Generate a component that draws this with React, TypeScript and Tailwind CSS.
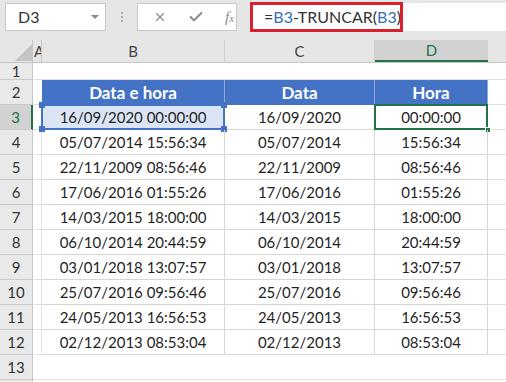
import { X, Check } from "lucide-react"

const rows = [
  ["16/09/2020 00:00:00", "16/09/2020", "00:00:00"],
  ["05/07/2014 15:56:34", "05/07/2014", "15:56:34"],
  ["22/11/2009 08:56:46", "22/11/2009", "08:56:46"],
  ["17/06/2016 01:55:26", "17/06/2016", "01:55:26"],
  ["14/03/2015 18:00:00", "14/03/2015", "18:00:00"],
  ["06/10/2014 20:44:59", "06/10/2014", "20:44:59"],
  ["03/01/2018 13:07:57", "03/01/2018", "13:07:57"],
  ["25/07/2016 09:56:46", "25/07/2016", "09:56:46"],
  ["24/05/2013 16:56:53", "24/05/2013", "16:56:53"],
  ["02/12/2013 08:53:04", "02/12/2013", "08:53:04"],
]

const font = { fontFamily: "Lato, 'Noto Sans', sans-serif" }

function RowHead({ n, active }: { n?: number; active?: boolean }) {
  return (
    <div
      className={`w-[33px] shrink-0 flex items-center justify-center border-b border-[#cacaca] text-[15px] ${
        active
          ? "bg-[#d2d2d2] text-[#217346] border-r-2 border-r-[#217346]"
          : "bg-[#e9e9e9] text-[#333] border-r border-r-[#c6c6c6]"
      }`}
    >
      {n}
    </div>
  )
}

function Handle({ className }: { className: string }) {
  return <div className={`absolute w-[6px] h-[6px] bg-[#4472c4] ${className}`} />
}

export default function App() {
  return (
    <div className="w-[506px] h-[382px] overflow-hidden bg-white text-[#1f1f1f]" style={font}>
      {/* formula bar */}
      <div className="h-[40px] bg-[#e6e6e6] flex items-start pt-[3px]">
        <div className="ml-[5px] w-[101px] h-[28px] bg-white border border-[#c8c8c8] flex items-center justify-between pl-[12px] pr-[6px]">
          <span className="text-[16px] text-[#333]">D3</span>
          <div className="w-0 h-0 border-l-[4px] border-r-[4px] border-t-[4px] border-l-transparent border-r-transparent border-t-[#888]" />
        </div>
        <div className="w-[31px] h-[28px] flex flex-col items-center justify-center gap-[2px]">
          <div className="w-[2px] h-[2px] bg-[#b0b0b0]" />
          <div className="w-[2px] h-[2px] bg-[#b0b0b0]" />
          <div className="w-[2px] h-[2px] bg-[#b0b0b0]" />
        </div>
        <div className="w-[100px] h-[28px] bg-white border border-[#c8c8c8] flex items-center pl-[15px] gap-[21px] text-[#8a8a8a]">
          <X className="w-[14px] h-[14px]" strokeWidth={2} />
          <Check className="w-[16px] h-[16px]" strokeWidth={3} />
          <span className="italic text-[15px]" style={{ fontFamily: "'Liberation Serif', serif" }}>
            f<span className="text-[11px]">x</span>
          </span>
        </div>
        <div className="ml-[13px] flex-1 h-[28px] bg-white relative flex items-center pl-[14px] text-[16px] text-[#333]">
          <div className="absolute left-0 top-[-1px] w-[153px] h-[30px] border-[3px] border-[#d9202d]" />
          <span>=</span>
          <span className="text-[#3a6db5]">B3</span>
          <span>-TRUNCAR(</span>
          <span className="text-[#3a6db5]">B3</span>
          <span>)</span>
        </div>
      </div>

      {/* column headers */}
      <div className="flex h-[23px] bg-[#e6e6e6] border-b border-[#c6c6c6] text-[15px] text-[#444]">
        <div className="w-[33px] shrink-0 relative border-r border-[#c6c6c6]">
          <svg className="absolute left-[15px] top-[4px]" width="17" height="17" viewBox="0 0 17 17">
            <polygon points="0,17 17,17 17,0" fill="#c4c4c4" />
          </svg>
        </div>
        <div className="w-[9px] shrink-0 overflow-hidden border-r border-[#c6c6c6] flex items-center pl-[1px]">A</div>
        <div className="w-[183px] shrink-0 border-r border-[#d0d0d0] flex items-center justify-center">B</div>
        <div className="w-[150px] shrink-0 border-r border-[#d0d0d0] flex items-center justify-center">C</div>
        <div className="w-[113px] shrink-0 bg-[#d2d2d2] text-[#217346] border-b-2 border-[#217346] flex items-center justify-center">
          D
        </div>
        <div className="flex-1" />
      </div>

      {/* row 1 */}
      <div className="flex h-[17px]">
        <RowHead n={1} />
        <div className="flex-1 border-b border-[#e1e1e1]" />
      </div>

      {/* row 2 - table header */}
      <div className="flex h-[25px]">
        <RowHead n={2} />
        <div className="w-[9px] shrink-0 border-b border-[#e1e1e1]" />
        {["Data e hora", "Data", "Hora"].map((h, i) => (
          <div
            key={h}
            className={`${
              ["w-[183px]", "w-[150px]", "w-[113px]"][i]
            } shrink-0 bg-[#4472c4] text-white font-bold text-[17px] flex items-center justify-center border-r border-[#8faadc]`}
          >
            {h}
          </div>
        ))}
        <div className="flex-1 border-b border-[#e1e1e1]" />
      </div>

      {/* data rows */}
      {rows.map((r, idx) => {
        const n = idx + 3
        const first = idx === 0
        return (
          <div key={n} className="flex h-[25px]">
            <RowHead n={n} active={first} />
            <div className="w-[9px] shrink-0 border-b border-r border-[#e1e1e1]" />
            <div
              className={`w-[183px] shrink-0 relative flex items-center justify-center text-[15px] border-b border-r border-[#d6d6d6] ${
                first ? "bg-[#dbe5f5]" : ""
              }`}
            >
              {r[0]}
              {first && (
                <>
                  <div className="absolute left-[-1px] top-[-1px] right-[-1px] bottom-[-1px] border-2 border-[#4472c4]" />
                  <Handle className="left-[-3px] top-[-3px]" />
                  <Handle className="right-[-3px] top-[-3px]" />
                  <Handle className="left-[-3px] bottom-[-3px]" />
                  <Handle className="right-[-3px] bottom-[-3px]" />
                </>
              )}
            </div>
            <div className="w-[150px] shrink-0 flex items-center justify-center text-[15px] border-b border-r border-[#d6d6d6]">
              {r[1]}
            </div>
            <div className="w-[113px] shrink-0 relative flex items-center justify-center text-[15px] border-b border-r border-[#d6d6d6]">
              {r[2]}
              {first && (
                <>
                  <div className="absolute left-[-1px] top-[-1px] right-[-1px] bottom-[-1px] border-2 border-[#217346]" />
                  <div className="absolute right-[-4px] bottom-[-4px] w-[6px] h-[6px] bg-[#217346] border border-white" />
                </>
              )}
            </div>
            <div className="flex-1 border-b border-[#e1e1e1]" />
          </div>
        )
      })}

      {/* empty rows */}
      <div className="flex h-[25px]">
        <RowHead n={13} />
        <div className="flex-1 border-b border-[#e1e1e1]" />
      </div>
      <div className="flex h-[25px]">
        <RowHead />
        <div className="flex-1" />
      </div>
    </div>
  )
}
